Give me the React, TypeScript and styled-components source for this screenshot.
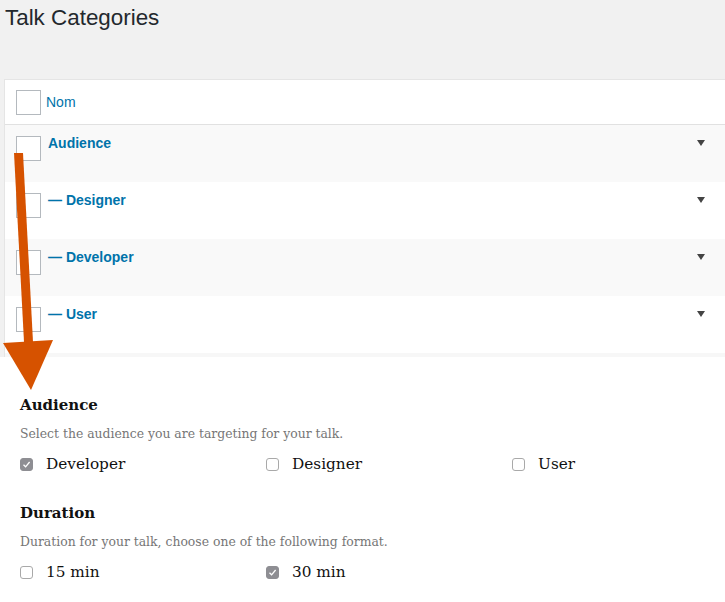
import React from "react";
import styled, { createGlobalStyle } from "styled-components";

const Global = createGlobalStyle`
  html, body { margin: 0; padding: 0; background: #ffffff; }
  body { font-family: "Liberation Sans", Arial, sans-serif; overflow: hidden; }
  * { box-sizing: border-box; }
`;

const Page = styled.div`
  position: relative;
  width: 725px;
  min-height: 602px;
  overflow: hidden;
`;

const AdminArea = styled.div`
  background: #f1f1f1;
  padding: 0 0 0 4px;
`;

const Title = styled.h1`
  margin: 0;
  padding: 5px 0 0 1px;
  height: 79px;
  font-family: "Liberation Sans", Arial, sans-serif;
  font-size: 22.4px;
  font-weight: 400;
  line-height: 26px;
  color: #23282d;
`;

const Table = styled.div`
  background: #ffffff;
  border: 1px solid #e5e5e5;
  border-right: none;
  border-bottom: none;
`;

const HeaderRow = styled.div`
  display: flex;
  align-items: center;
  height: 45px;
  padding-left: 11px;
  border-bottom: 1px solid #e1e1e1;
`;

const Row = styled.div<{ $alt: boolean }>`
  display: flex;
  align-items: flex-start;
  height: 57px;
  padding: 11px 0 0 11px;
  background: ${(p) => (p.$alt ? "#f9f9f9" : "#ffffff")};
`;

const FooterStrip = styled.div`
  height: 4px;
  background: #f7f7f7;
`;

const BoxCheck = styled.span`
  display: inline-block;
  flex: none;
  width: 25px;
  height: 25px;
  border: 1px solid #b4b9be;
  background: #ffffff;
`;

const HeadLink = styled.span`
  margin-left: 5px;
  font-size: 14px;
  color: #0073aa;
  line-height: 20px;
`;

const RowLink = styled.span`
  flex: 1;
  margin-left: 7px;
  margin-top: -3px;
  font-size: 14px;
  font-weight: 700;
  color: #0073aa;
  line-height: 20px;
`;

const Toggle = styled.span`
  flex: none;
  width: 0;
  height: 0;
  margin: 4px 20px 0 0;
  border-left: 4px solid transparent;
  border-right: 4px solid transparent;
  border-top: 6px solid #444444;
`;

const Form = styled.div`
  padding: 38px 20px 0 20px;
  font-family: "DejaVu Serif", "Liberation Serif", serif;
`;

const Field = styled.div`
  margin-bottom: 28px;
`;

const FieldTitle = styled.div`
  font-size: 15px;
  font-weight: 700;
  color: #111111;
  line-height: 20px;
`;

const FieldHelp = styled.div`
  margin-top: 10px;
  font-size: 12.4px;
  color: #767676;
  line-height: 18px;
`;

const Options = styled.div`
  display: grid;
  grid-template-columns: repeat(3, 246px);
  margin-top: 10px;
`;

const Option = styled.label`
  display: flex;
  align-items: center;
  font-size: 15.3px;
  color: #111111;
  line-height: 22px;
`;

const FormCheck = styled.span<{ $checked: boolean }>`
  display: inline-flex;
  align-items: center;
  justify-content: center;
  flex: none;
  width: 13px;
  height: 13px;
  margin-right: 13px;
  border-radius: 3px;
  border: 1px solid ${(p) => (p.$checked ? "#8e8e93" : "#a9a9a9")};
  background: ${(p) => (p.$checked ? "#8e8e93" : "#ffffff")};
`;

const ArrowLayer = styled.svg`
  position: absolute;
  left: 0;
  top: 0;
  pointer-events: none;
`;

const rows = [
  { name: "Audience", alt: true },
  { name: "— Designer", alt: false },
  { name: "— Developer", alt: true },
  { name: "— User", alt: false },
];

function Check({ checked }: { checked: boolean }) {
  return (
    <FormCheck $checked={checked}>
      {checked && (
        <svg width="9" height="9" viewBox="0 0 9 9">
          <path d="M1.5 4.8 L3.6 6.8 L7.6 2" fill="none" stroke="#ffffff" strokeWidth="1.3" />
        </svg>
      )}
    </FormCheck>
  );
}

export default function App() {
  return (
    <Page>
      <Global />
      <AdminArea>
        <Title>Talk Categories</Title>
        <Table>
          <HeaderRow>
            <BoxCheck />
            <HeadLink>Nom</HeadLink>
          </HeaderRow>
          {rows.map((r) => (
            <Row key={r.name} $alt={r.alt}>
              <BoxCheck />
              <RowLink>{r.name}</RowLink>
              <Toggle />
            </Row>
          ))}
          <FooterStrip />
        </Table>
      </AdminArea>
      <Form>
        <Field>
          <FieldTitle>Audience</FieldTitle>
          <FieldHelp>Select the audience you are targeting for your talk.</FieldHelp>
          <Options>
            <Option><Check checked />Developer</Option>
            <Option><Check checked={false} />Designer</Option>
            <Option><Check checked={false} />User</Option>
          </Options>
        </Field>
        <Field>
          <FieldTitle>Duration</FieldTitle>
          <FieldHelp>Duration for your talk, choose one of the following format.</FieldHelp>
          <Options>
            <Option><Check checked={false} />15 min</Option>
            <Option><Check checked />30 min</Option>
          </Options>
        </Field>
      </Form>
      <ArrowLayer width="60" height="400" viewBox="0 0 60 400">
        <polygon points="14,153 23,153 33,342 24,342" fill="#d65200" />
        <polygon points="3,343 53,340 31,390" fill="#d65200" />
      </ArrowLayer>
    </Page>
  );
}
